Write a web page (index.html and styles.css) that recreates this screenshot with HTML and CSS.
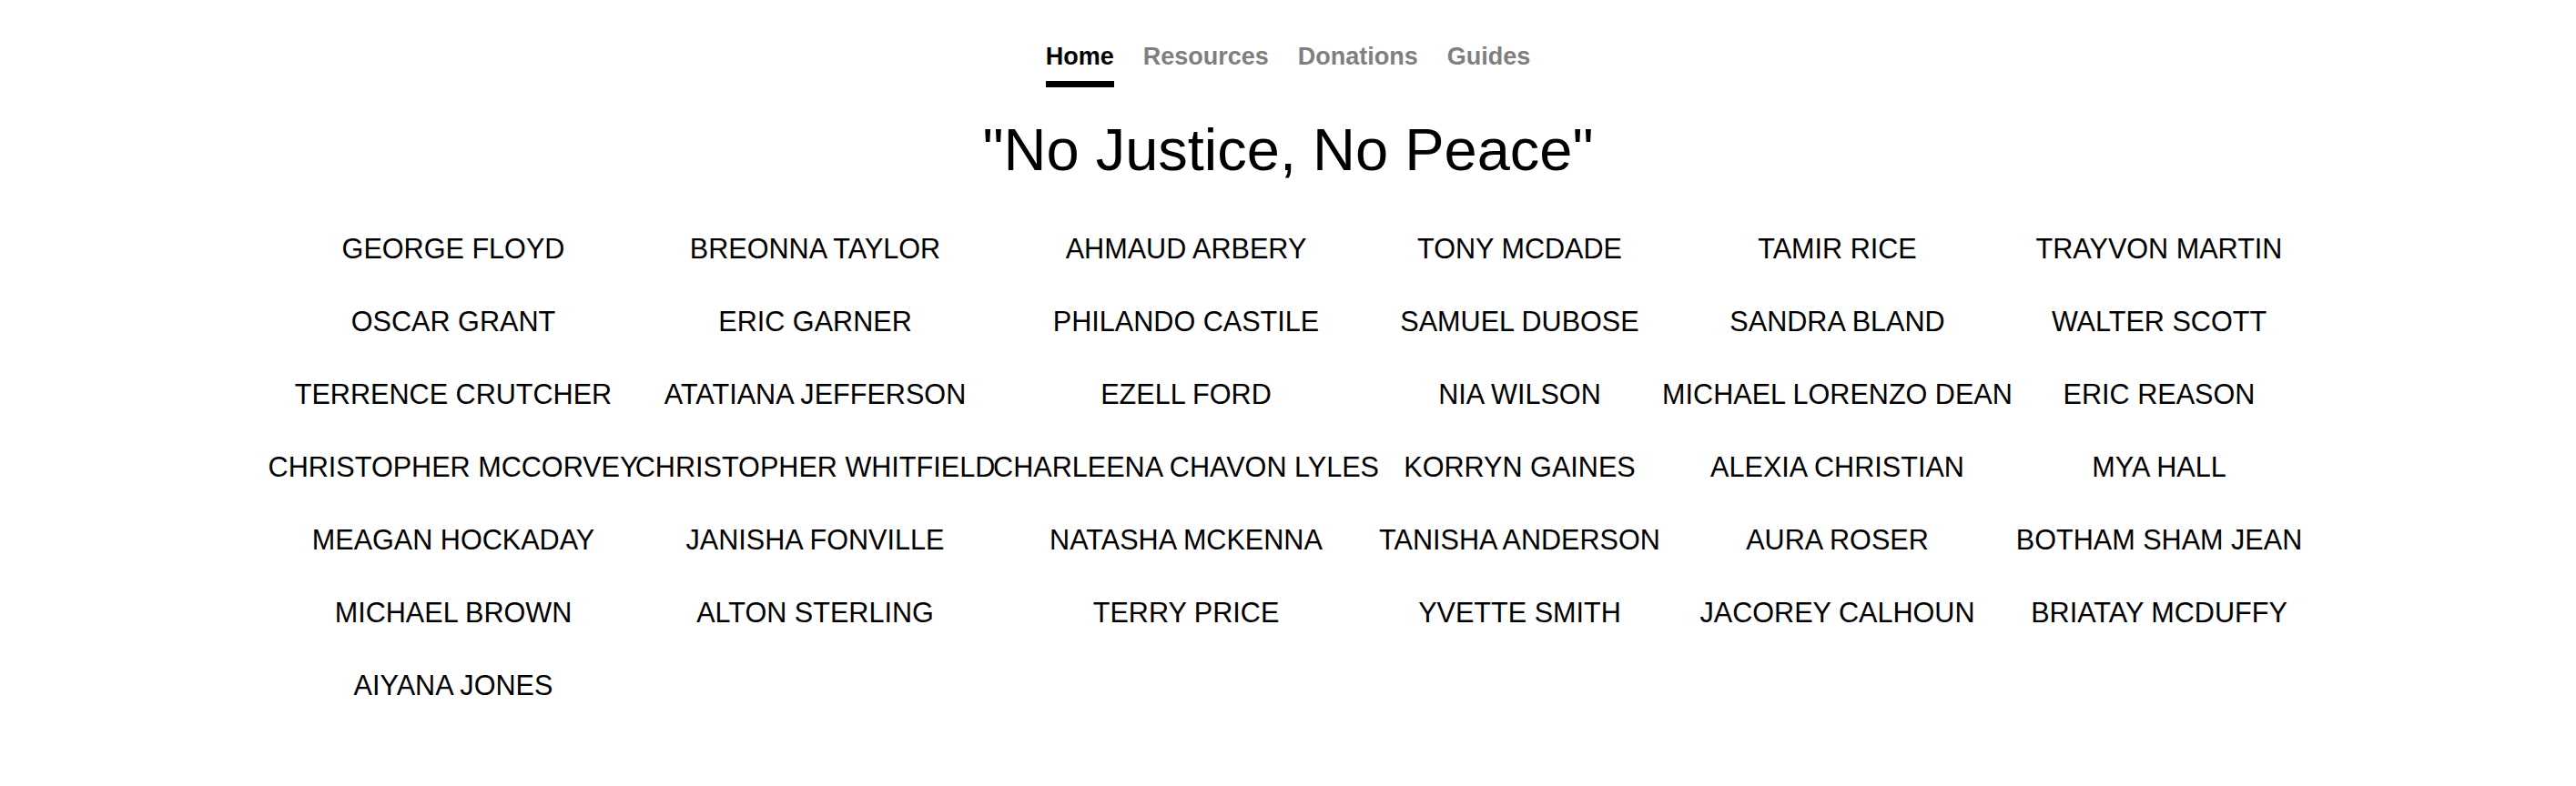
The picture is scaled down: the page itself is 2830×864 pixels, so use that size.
FILE: index.html
```html
<!DOCTYPE html>
<html lang="en">
<head>
<meta charset="utf-8">
<title>No Justice, No Peace</title>
<link rel="stylesheet" href="styles.css">
</head>
<body>
<nav class="tabs">
  <a class="tab active" href="#">Home</a>
  <a class="tab" href="#">Resources</a>
  <a class="tab" href="#">Donations</a>
  <a class="tab" href="#">Guides</a>
</nav>
<main class="content">
  <h1 class="title">"No Justice, No Peace"</h1>
  <div class="names">
    <div class="name">GEORGE FLOYD</div>
    <div class="name">BREONNA TAYLOR</div>
    <div class="name">AHMAUD ARBERY</div>
    <div class="name">TONY MCDADE</div>
    <div class="name">TAMIR RICE</div>
    <div class="name">TRAYVON MARTIN</div>
    <div class="name">OSCAR GRANT</div>
    <div class="name">ERIC GARNER</div>
    <div class="name">PHILANDO CASTILE</div>
    <div class="name">SAMUEL DUBOSE</div>
    <div class="name">SANDRA BLAND</div>
    <div class="name">WALTER SCOTT</div>
    <div class="name">TERRENCE CRUTCHER</div>
    <div class="name">ATATIANA JEFFERSON</div>
    <div class="name">EZELL FORD</div>
    <div class="name">NIA WILSON</div>
    <div class="name">MICHAEL LORENZO DEAN</div>
    <div class="name">ERIC REASON</div>
    <div class="name">CHRISTOPHER MCCORVEY</div>
    <div class="name">CHRISTOPHER WHITFIELD</div>
    <div class="name">CHARLEENA CHAVON LYLES</div>
    <div class="name">KORRYN GAINES</div>
    <div class="name">ALEXIA CHRISTIAN</div>
    <div class="name">MYA HALL</div>
    <div class="name">MEAGAN HOCKADAY</div>
    <div class="name">JANISHA FONVILLE</div>
    <div class="name">NATASHA MCKENNA</div>
    <div class="name">TANISHA ANDERSON</div>
    <div class="name">AURA ROSER</div>
    <div class="name">BOTHAM SHAM JEAN</div>
    <div class="name">MICHAEL BROWN</div>
    <div class="name">ALTON STERLING</div>
    <div class="name">TERRY PRICE</div>
    <div class="name">YVETTE SMITH</div>
    <div class="name">JACOREY CALHOUN</div>
    <div class="name">BRIATAY MCDUFFY</div>
    <div class="name">AIYANA JONES</div>
  </div>
</main>
</body>
</html>
```
FILE: styles.css
```css
html, body {
  margin: 0;
  padding: 0;
  background: #ffffff;
}

body {
  font-family: "Liberation Sans", Arial, sans-serif;
  color: #000000;
}

.tabs {
  display: flex;
  justify-content: center;
  gap: 32px;
  padding-top: 47px;
}

.tab {
  font-family: "Liberation Sans", Arial, sans-serif;
  font-weight: 700;
  font-size: 27px;
  line-height: 31px;
  color: #7f7f7f;
  text-decoration: none;
  padding-bottom: 11px;
  border-bottom: 7px solid transparent;
}

.tab.active {
  color: #000000;
  border-bottom-color: #000000;
}

.content {
  display: flex;
  flex-direction: column;
  align-items: center;
}

.title {
  margin: 31px 0 0;
  font-size: 65px;
  font-weight: 400;
  line-height: normal;
}

.names {
  display: grid;
  grid-template-columns: 401px 394px 421px 312px 386px 321px;
  justify-content: center;
  row-gap: 44px;
  margin-top: 53px;
}

.name {
  display: flex;
  justify-content: center;
  font-size: 30.6px;
  line-height: 36px;
  white-space: nowrap;
}
```
